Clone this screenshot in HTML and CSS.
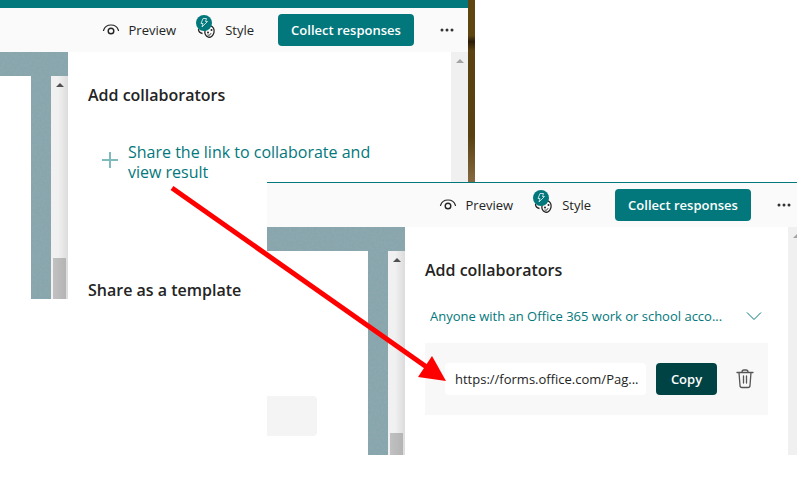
FILE: index.html
```
<!DOCTYPE html>
<html lang="en">
<head>
    <meta charset="UTF-8">
    <meta name="viewport" content="width=device-width, initial-scale=1.0">
    <title>Add collaborators</title>
    <link rel="stylesheet" href="styles.css">
</head>
<body>
    <svg class="symbols" width="0" height="0" aria-hidden="true">
        <symbol id="eye" viewBox="0 0 18 16">
            <path d="M1.500 8.500C2.500 5.200 5.400 3 9 3s6.500 2.200 7.500 5.500" fill="none" stroke="currentColor" stroke-width="1.200" stroke-linecap="round"/>
            <circle cx="9" cy="9" r="2.800" fill="none" stroke="currentColor" stroke-width="1.400"/>
        </symbol>
        <symbol id="style" viewBox="0 0 20 24">
            <path d="M2.500 14c0 2.500 1.500 4 4 4.500" fill="none" stroke="#242424" stroke-width="1.300"/>
            <ellipse cx="13.500" cy="16.500" rx="4.600" ry="5.800" transform="rotate(12 13.500 16.500)" fill="#fafafa" stroke="#242424" stroke-width="1.300"/>
            <circle cx="12" cy="17.500" r="1" fill="#242424"/>
            <circle cx="15.500" cy="15" r="1" fill="#242424"/>
            <path d="M11.500 20c1.500.6 3-.2 3.500-1.700" fill="none" stroke="#242424"/>
            <circle cx="8" cy="8" r="8" fill="#03787c"/>
            <path d="M7 3.500h3.500L9.500 6.500h2L6 12l1-3.500H5z" fill="none" stroke="#d5eaea" stroke-width=".9" stroke-linejoin="round"/>
        </symbol>
        <symbol id="dots" viewBox="0 0 14 4">
            <circle cx="2" cy="2" r="1.500"/><circle cx="7" cy="2" r="1.500"/><circle cx="12" cy="2" r="1.500"/>
        </symbol>
        <symbol id="up" viewBox="0 0 8 4">
            <path d="M0 4 4 0l4 4z"/>
        </symbol>
    </svg>

    <main class="stage">
        <section class="shot shot-first">
            <div class="titlebar"></div>
            <header class="toolbar">
                <button class="tool"><svg class="icon-eye"><use href="#eye"/></svg>Preview</button>
                <button class="tool tool-style"><svg class="icon-style"><use href="#style"/></svg>Style</button>
                <button class="collect">Collect responses</button>
                <button class="more" aria-label="More options"><svg class="icon-dots"><use href="#dots"/></svg></button>
            </header>
            <div class="content">
                <div class="canvas">
                    <div class="sheet"></div>
                    <div class="scroll"><svg class="icon-up"><use href="#up"/></svg><div class="thumb"></div></div>
                </div>
                <div class="panel">
                    <h2>Add collaborators</h2>
                    <a class="share" href="#">
                        <svg class="icon-plus" viewBox="0 0 16 16"><path d="M8 0v16M0 8h16" stroke="#7fbbbd" stroke-width="2"/></svg>
                        <span>Share the link to collaborate and view result</span>
                    </a>
                    <h2>Share as a template</h2>
                </div>
                <div class="scroll scroll-page"><svg class="icon-up"><use href="#up"/></svg></div>
            </div>
        </section>

        <section class="shot shot-second">
            <header class="toolbar">
                <button class="tool"><svg class="icon-eye"><use href="#eye"/></svg>Preview</button>
                <button class="tool tool-style"><svg class="icon-style"><use href="#style"/></svg>Style</button>
                <button class="collect">Collect responses</button>
                <button class="more" aria-label="More options"><svg class="icon-dots"><use href="#dots"/></svg></button>
            </header>
            <div class="content">
                <div class="canvas">
                    <div class="sheet"><div class="placeholder"></div></div>
                    <div class="scroll"><svg class="icon-up"><use href="#up"/></svg><div class="thumb"></div></div>
                </div>
                <div class="panel">
                    <h2>Add collaborators</h2>
                    <div class="audience">
                        <select aria-label="Who can collaborate">
                            <option>Anyone with an Office 365 work or school acco...</option>
                        </select>
                        <svg class="icon-chevron" viewBox="0 0 16 10"><path d="M1 1.500l7 7 7-7" fill="none" stroke="#03787c"/></svg>
                    </div>
                    <div class="link-row">
                        <input type="text" aria-label="Collaboration link" value="https://forms.office.com/Pag..." readonly>
                        <button class="copy">Copy</button>
                        <button class="delete" aria-label="Delete link">
                            <svg class="icon-trash" viewBox="0 0 18 20"><path d="M1 3.500h16M6 3.500V3a2 2 0 0 1 2-2h2a2 2 0 0 1 2 2v.5M3 3.500l1 13A2 2 0 0 0 6 18.500h6a2 2 0 0 0 2-2l1-13M7.500 7v7M10.500 7v7" fill="none" stroke="#555" stroke-width="1.300" stroke-linecap="round"/></svg>
                        </button>
                    </div>
                </div>
                <div class="scroll scroll-page"><svg class="icon-up"><use href="#up"/></svg></div>
            </div>
        </section>

        <svg class="arrow" width="450" height="385" aria-hidden="true">
            <path d="M172 188 428 368" stroke="#f00" stroke-width="5"/>
            <path d="M446 381 432 356 418 377z" fill="#f00"/>
        </svg>
    </main>
</body>
</html>
```
FILE: styles.css
```
* {
    box-sizing: border-box;
}
body {
    margin: 0;
    background: #fff;
    color: #242424;
    font-family: "Open Sans", "Noto Sans", sans-serif;
    font-size: 13px;
}
button, input, select {
    font: inherit;
    color: inherit;
    border: none;
    background: none;
    padding: 0;
    margin: 0;
}
button {
    cursor: pointer;
}
svg {
    display: block;
    flex: none;
}
.symbols {
    position: absolute;
}
.stage {
    position: relative;
    min-height: 100vh;
    overflow: hidden;
}

/* overlapping windows */
.shot {
    position: absolute;
    background: #fff;
}
.shot-first {
    top: 0;
    left: 0;
    right: 325px;
    border-right: 7px solid #5a4012;
    border-image: linear-gradient(#5f4610, #5f4610 12%, #2b1d08 14%, #5c4210 17%, #584010 45%, #85683f 60%) 1;
}
.shot-second {
    top: 182px;
    left: 267px;
    right: 3px;
    border-top: 1px solid #03787c;
}
.titlebar {
    height: 8px;
    background: #03787c;
}
.toolbar {
    display: flex;
    align-items: center;
    justify-content: flex-end;
    height: 44px;
    padding-right: 14px;
    background: #fafafa;
}
.shot-second .toolbar {
    padding-right: 6px;
}
.tool {
    display: flex;
    align-items: center;
    gap: 9px;
    margin-right: 20px;
    font-weight: 500;
}
.tool-style {
    margin-right: 24px;
}
.collect {
    width: 136px;
    height: 32px;
    margin-right: 26px;
    border-radius: 4px;
    background: #03787c;
    color: #fff;
    font-weight: 600;
}
.icon-eye {
    width: 18px;
    height: 16px;
}
.icon-style {
    width: 20px;
    height: 24px;
    margin-bottom: 6px;
}
.icon-dots {
    width: 14px;
    height: 4px;
    fill: #333;
}
.content {
    display: flex;
}

/* form preview with the themed backdrop */
.canvas {
    display: flex;
    width: 68px;
    height: 247px;
    padding-top: 24px;
    background: #8ca7ae url("data:image/svg+xml,%3Csvg xmlns='http://www.w3.org/2000/svg' width='140' height='140'%3E%3Cfilter id='n' x='0' y='0' width='1' height='1'%3E%3CfeTurbulence type='fractalNoise' baseFrequency='.4' numOctaves='3' stitchTiles='stitch'/%3E%3CfeColorMatrix values='0 0 0 0 .2 0 0 0 0 .35 0 0 0 0 .4 4 0 0 0 -1.6'/%3E%3C/filter%3E%3Crect width='140' height='140' filter='url(%23n)' opacity='.3'/%3E%3C/svg%3E");
}
.sheet {
    flex: 1;
    margin-right: 20px;
    background: #fff;
}
.shot-second .canvas {
    width: 138px;
    height: 228px;
}
.placeholder {
    width: 50px;
    height: 40px;
    margin-top: 145px;
    border-radius: 0 4px 4px 0;
    background: #f4f4f4;
}
.scroll {
    display: flex;
    flex-direction: column;
    align-items: center;
    justify-content: space-between;
    width: 17px;
    padding-top: 7px;
    background: linear-gradient(to right, #f1f1f1 40%, #dcdcdc);
}
.thumb {
    width: 13px;
    height: 41px;
    background: linear-gradient(to right, #c1c1c1, #b4b4b4);
}
.shot-second .thumb {
    height: 22px;
}
.icon-up {
    width: 8px;
    height: 4px;
    fill: #505050;
}
.scroll-page {
    background: #f0f0f0;
}
.scroll-page .icon-up {
    fill: #a3a3a3;
}
.shot-second .scroll-page {
    width: 9px;
    overflow: hidden;
    align-items: flex-start;
    padding-left: 5px;
}

/* side panel */
.panel {
    flex: 1;
    min-width: 0;
    padding: 31px 20px 0;
    background: #fff;
}
h2 {
    margin: 0;
    font-size: 16px;
    line-height: 24px;
    font-weight: 600;
}
.share {
    display: flex;
    align-items: center;
    gap: 10px;
    margin: 35px 60px 96px 14px;
    color: #03787c;
    font-size: 16px;
    line-height: 20px;
    text-decoration: none;
}
.icon-plus {
    width: 16px;
    height: 16px;
    margin-bottom: 4px;
}
.audience {
    display: flex;
    align-items: center;
    gap: 10px;
    height: 32px;
    margin: 18px 0 11px;
    padding: 0 6px 0 5px;
}
.audience select {
    flex: 1;
    min-width: 0;
    appearance: none;
    color: #03787c;
}
.icon-chevron {
    width: 16px;
    height: 10px;
}
.link-row {
    display: flex;
    align-items: center;
    gap: 10px;
    padding: 20px 14px 20px 20px;
    background: #f8f8f8;
}
.link-row input {
    flex: 1;
    min-width: 0;
    height: 32px;
    padding: 0 4px 0 10px;
    border-radius: 4px;
    background: #fff;
}
.copy {
    width: 61px;
    height: 32px;
    border-radius: 4px;
    background: #004344;
    color: #fff;
    font-weight: 600;
}
.delete {
    padding-left: 9px;
}
.icon-trash {
    width: 18px;
    height: 20px;
}

.arrow {
    position: absolute;
    top: 0;
    left: 0;
    pointer-events: none;
}
```
